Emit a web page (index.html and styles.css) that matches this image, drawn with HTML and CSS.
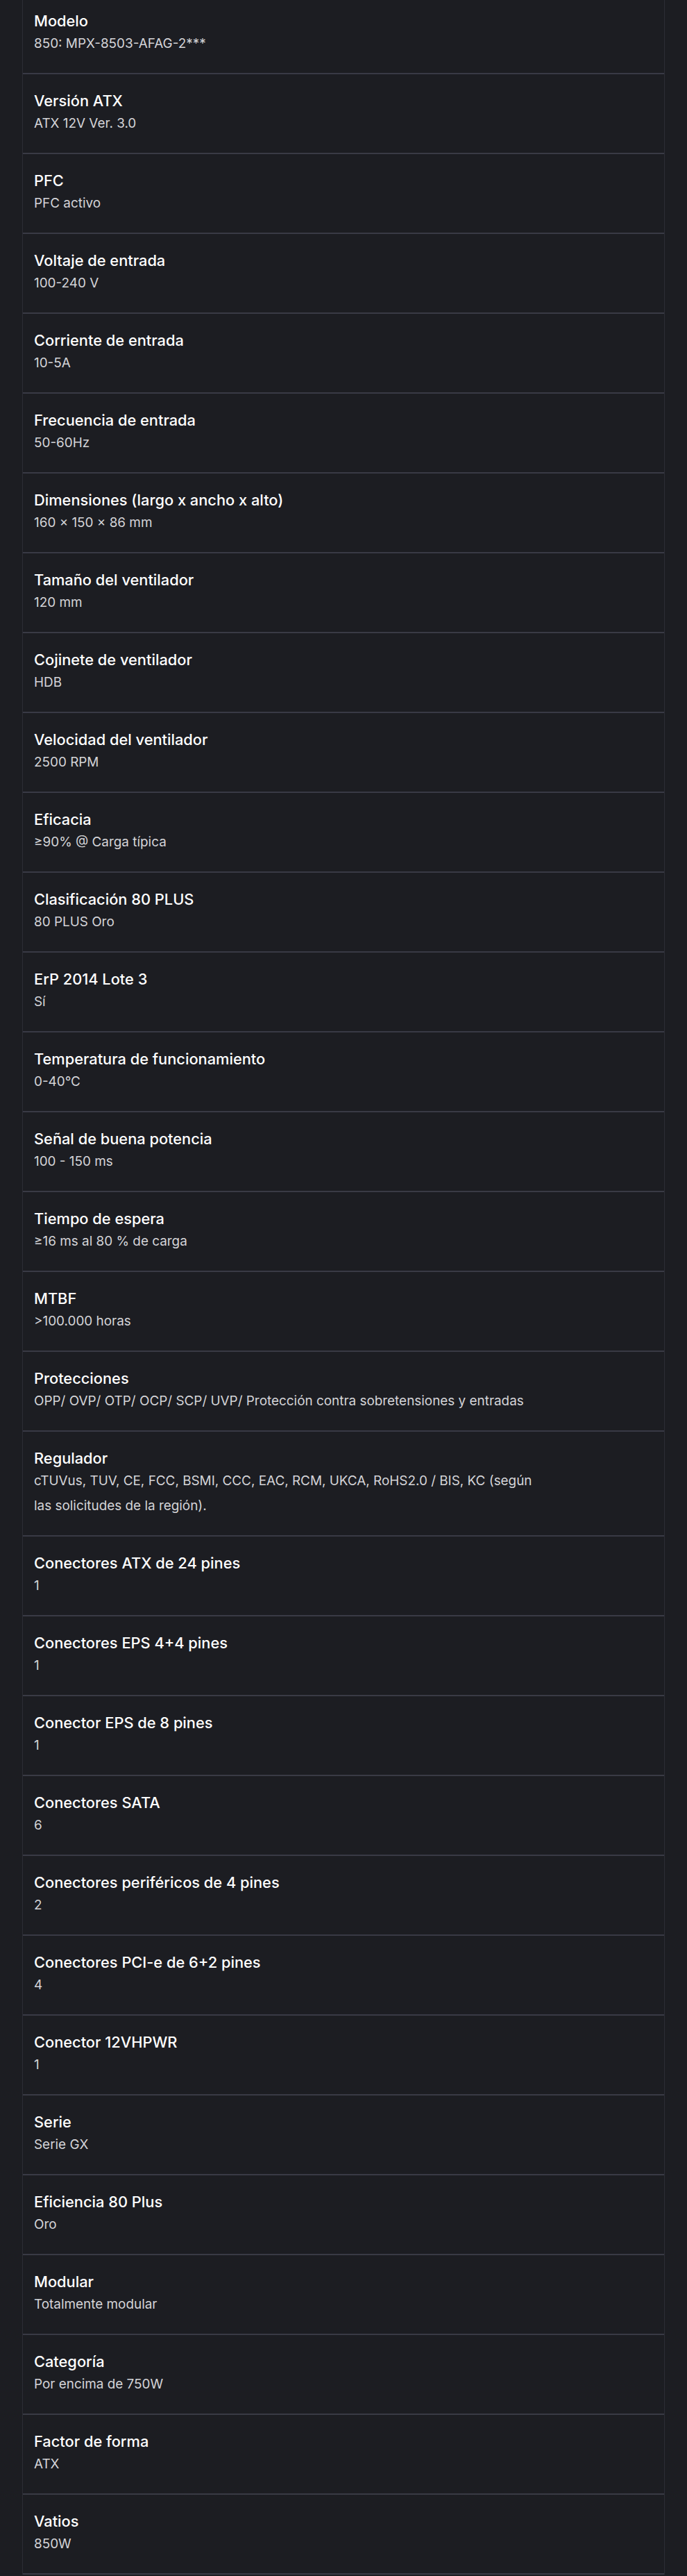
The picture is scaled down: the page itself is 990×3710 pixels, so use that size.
FILE: index.html
```html
<!DOCTYPE html>
<html lang="es">
<head>
<meta charset="utf-8">
<title>Especificaciones</title>
<link rel="stylesheet" href="styles.css">
</head>
<body>
<div class="specs">
  <div class="row"><div class="label">Modelo</div><div class="value">850: MPX-8503-AFAG-2***</div></div>
  <div class="row"><div class="label">Versión ATX</div><div class="value">ATX 12V Ver. 3.0</div></div>
  <div class="row"><div class="label">PFC</div><div class="value">PFC activo</div></div>
  <div class="row"><div class="label">Voltaje de entrada</div><div class="value">100-240 V</div></div>
  <div class="row"><div class="label">Corriente de entrada</div><div class="value">10-5A</div></div>
  <div class="row"><div class="label">Frecuencia de entrada</div><div class="value">50-60Hz</div></div>
  <div class="row"><div class="label">Dimensiones (largo x ancho x alto)</div><div class="value">160 × 150 × 86 mm</div></div>
  <div class="row"><div class="label">Tamaño del ventilador</div><div class="value">120 mm</div></div>
  <div class="row"><div class="label">Cojinete de ventilador</div><div class="value">HDB</div></div>
  <div class="row"><div class="label">Velocidad del ventilador</div><div class="value">2500 RPM</div></div>
  <div class="row"><div class="label">Eficacia</div><div class="value">≥90% @ Carga típica</div></div>
  <div class="row"><div class="label">Clasificación 80 PLUS</div><div class="value">80 PLUS Oro</div></div>
  <div class="row"><div class="label">ErP 2014 Lote 3</div><div class="value">Sí</div></div>
  <div class="row"><div class="label">Temperatura de funcionamiento</div><div class="value">0-40°C</div></div>
  <div class="row"><div class="label">Señal de buena potencia</div><div class="value">100 - 150 ms</div></div>
  <div class="row"><div class="label">Tiempo de espera</div><div class="value">≥16 ms al 80 % de carga</div></div>
  <div class="row"><div class="label">MTBF</div><div class="value">&gt;100.000 horas</div></div>
  <div class="row"><div class="label">Protecciones</div><div class="value">OPP/ OVP/ OTP/ OCP/ SCP/ UVP/ Protección contra sobretensiones y entradas</div></div>
  <div class="row"><div class="label">Regulador</div><div class="value">cTUVus, TUV, CE, FCC, BSMI, CCC, EAC, RCM, UKCA, RoHS2.0 / BIS, KC (según las solicitudes de la región).</div></div>
  <div class="row"><div class="label">Conectores ATX de 24 pines</div><div class="value">1</div></div>
  <div class="row"><div class="label">Conectores EPS 4+4 pines</div><div class="value">1</div></div>
  <div class="row"><div class="label">Conector EPS de 8 pines</div><div class="value">1</div></div>
  <div class="row"><div class="label">Conectores SATA</div><div class="value">6</div></div>
  <div class="row"><div class="label">Conectores periféricos de 4 pines</div><div class="value">2</div></div>
  <div class="row"><div class="label">Conectores PCI-e de 6+2 pines</div><div class="value">4</div></div>
  <div class="row"><div class="label">Conector 12VHPWR</div><div class="value">1</div></div>
  <div class="row"><div class="label">Serie</div><div class="value">Serie GX</div></div>
  <div class="row"><div class="label">Eficiencia 80 Plus</div><div class="value">Oro</div></div>
  <div class="row"><div class="label">Modular</div><div class="value">Totalmente modular</div></div>
  <div class="row"><div class="label">Categoría</div><div class="value">Por encima de 750W</div></div>
  <div class="row"><div class="label">Factor de forma</div><div class="value">ATX</div></div>
  <div class="row"><div class="label">Vatios</div><div class="value">850W</div></div>
</div>
</body>
</html>
```
FILE: styles.css
```css
html, body {
  margin: 0;
  padding: 0;
  background: #1c1d22;
}
body {
  font-family: Inter, "Liberation Sans", Arial, sans-serif;
  overflow: hidden;
}
.specs {
  margin: -8px 32px 0 32px;
  border-left: 1px solid #2c2d35;
  border-right: 1px solid #2c2d35;
  display: flex;
  flex-direction: column;
}
.row {
  padding: 23px 16px 24px 16px;
  border-bottom: 2px solid #393a45;
  display: flex;
  flex-direction: column;
}
.label {
  color: #ffffff;
  font-size: 21.8px;
  line-height: 30px;
  font-weight: 500;
}
.value {
  color: #d4d4d8;
  font-size: 18.9px;
  line-height: 36px;
  max-width: 730px;
}
```
